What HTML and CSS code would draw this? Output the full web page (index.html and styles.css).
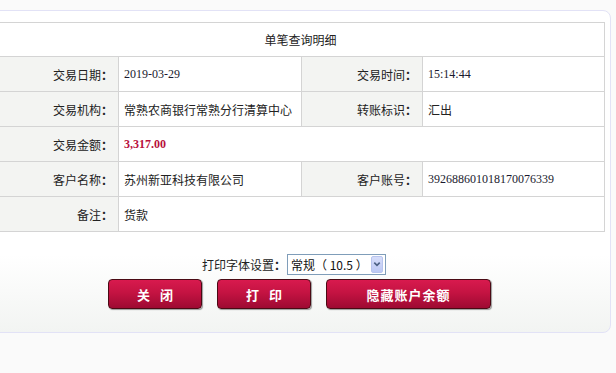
FILE: index.html
```html
<!DOCTYPE html>
<html lang="zh-CN">
<head>
    <meta charset="UTF-8">
    <title>单笔查询明细</title>
    <link rel="stylesheet" href="styles.css">
</head>
<body>
    <div class="panel">
        <table class="detail">
            <colgroup>
                <col class="c1"><col class="c2"><col class="c3"><col class="c4">
            </colgroup>
            <tr>
                <td class="title" colspan="4">单笔查询明细</td>
            </tr>
            <tr>
                <td class="label">交易日期<b>：</b></td>
                <td class="num">2019-03-29</td>
                <td class="label">交易时间<b>：</b></td>
                <td class="num">15:14:44</td>
            </tr>
            <tr>
                <td class="label">交易机构<b>：</b></td>
                <td>常熟农商银行常熟分行清算中心</td>
                <td class="label">转账标识<b>：</b></td>
                <td>汇出</td>
            </tr>
            <tr>
                <td class="label">交易金额<b>：</b></td>
                <td class="num amount" colspan="3">3,317.00</td>
            </tr>
            <tr>
                <td class="label">客户名称<b>：</b></td>
                <td>苏州新亚科技有限公司</td>
                <td class="label">客户账号<b>：</b></td>
                <td class="num">392688601018170076339</td>
            </tr>
            <tr>
                <td class="label">备注<b>：</b></td>
                <td colspan="3">货款</td>
            </tr>
        </table>

        <div class="print-font">
            <span>打印字体设置<b>：</b></span>
            <div class="select-box">
                <select id="fontSize">
                    <option>常规（ 10.5 ）</option>
                    <option>大号（ 12 ）</option>
                </select>
                <span class="arrow">
                    <svg width="11" height="17" viewBox="0 0 11 17">
                        <path d="M2.5 6.5 L5.5 9.5 L8.5 6.5" fill="none" stroke="#4d6185" stroke-width="1.8"/>
                    </svg>
                </span>
            </div>
        </div>

        <div class="actions">
            <button class="btn spaced">关闭</button>
            <button class="btn spaced">打印</button>
            <button class="btn wide">隐藏账户余额</button>
        </div>
    </div>
</body>
</html>
```

FILE: styles.css
```css
body {
    margin: 0;
    background: #fafafa;
    font-family: "Noto Sans CJK SC", sans-serif;
    font-size: 12px;
    color: #222;
    overflow: hidden;
}
.panel {
    margin: 10px 0 0 -13px;
    width: 624px;
    height: 323px;
    padding: 11px 8px 0 8px;
    box-sizing: border-box;
    border: 1px solid #e2e2f6;
    border-radius: 8px;
    background: linear-gradient(to bottom, #ffffff 0, #ffffff 76%, #f2f4f2 100%);
}
.detail {
    border-collapse: collapse;
    width: 608px;
    table-layout: fixed;
}
.c1 { width: 122px; }
.c2 { width: 183px; }
.c3 { width: 121px; }
.c4 { width: 182px; }
.detail td {
    border: 1px solid #d4d4d4;
    height: 34px;
    padding: 0 5px;
    white-space: nowrap;
    background: #fff;
}
.detail td.title {
    text-align: center;
    height: 33px;
}
.detail td.label {
    background: #f3f4f2;
    text-align: right;
    padding-right: 5px;
}
.detail td.num {
    font-family: "Liberation Serif", serif;
    font-size: 12px;
    color: #1a1a2e;
}
.detail td.amount {
    color: #b8103c;
    font-weight: bold;
}
.print-font {
    display: flex;
    justify-content: center;
    align-items: center;
    margin: 21px 0 0 -10px;
    height: 22px;
}
.select-box {
    position: relative;
    margin-left: 1px;
}
.select-box select {
    -webkit-appearance: none;
    appearance: none;
    width: 99px;
    height: 21px;
    border: 1px solid #7f9db9;
    background: #fff;
    font-family: "Noto Sans CJK SC", sans-serif;
    font-size: 12px;
    color: #111;
    padding: 0 0 0 3px;
    outline: none;
}
.arrow {
    position: absolute;
    top: 2px;
    right: 3px;
    width: 12px;
    height: 17px;
    background: linear-gradient(to bottom, #d6ddfa, #bcc8f4);
    border: 1px solid #b8c4ee;
    box-sizing: border-box;
    border-radius: 2px;
    display: flex;
    align-items: center;
    justify-content: center;
}
.actions {
    display: flex;
    justify-content: center;
    gap: 15px;
    margin: 4px 0 0 1px;
}
.btn {
    width: 94px;
    height: 30px;
    border: 1px solid #4a0a14;
    border-radius: 4px;
    background: linear-gradient(to bottom, #d81a4e 0, #c41342 45%, #9e0a32 100%);
    box-shadow: 1px 1px 1px #9a9a9a;
    color: #fff;
    font-family: "Noto Sans CJK SC", sans-serif;
    font-size: 13px;
    font-weight: bold;
    cursor: pointer;
    padding: 0;
}
.btn.spaced {
    letter-spacing: 10px;
    padding-left: 10px;
}
.btn.wide {
    width: 165px;
    font-size: 13px;
    letter-spacing: 1px;
}
```
